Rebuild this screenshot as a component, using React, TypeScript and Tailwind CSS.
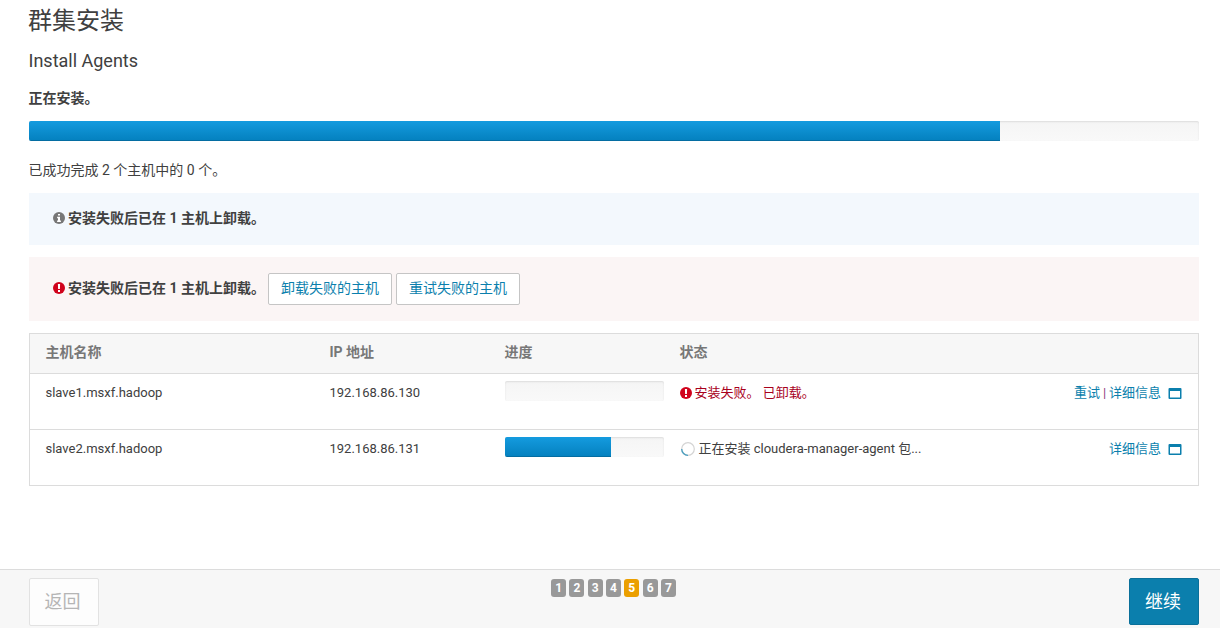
import React from 'react';

const ProgressBar = ({ value }: { value: number }) => (
  <div className="h-5 w-full overflow-hidden rounded-xs bg-linear-to-b from-[#f5f5f5] to-[#f9f9f9] shadow-[inset_0_1px_2px_rgba(0,0,0,0.1)]">
    <div
      className="h-full bg-linear-to-b from-[#149bdf] to-[#0480be] shadow-[inset_0_-1px_0_rgba(0,0,0,0.15)]"
      style={{ width: `${value}%` }}
    />
  </div>
);

const InfoIcon = () => (
  <svg className="mr-[3px] h-3 w-3 shrink-0" viewBox="0 0 12 12">
    <circle cx="6" cy="6" r="6" fill="#777" />
    <path d="M5 2h2v1.6H5z M4.1 4.8H7v3.7h.9V10H4.1V8.5H5V6.2h-.9z" fill="#fff" />
  </svg>
);

const ErrorIcon = () => (
  <svg className="mr-[3px] h-3 w-3 shrink-0" viewBox="0 0 12 12">
    <circle cx="6" cy="6" r="6" fill="#d0021b" />
    <path d="M4.9 2h2.2L6.9 7H5.1z M5 8h2v2H5z" fill="#fff" />
  </svg>
);

const WindowIcon = () => (
  <svg className="h-3 w-3.5" viewBox="0 0 14 12">
    <rect x="0.5" y="1" width="13" height="11" rx="1" fill="#0b7fad" />
    <rect x="2" y="4" width="10" height="6.5" fill="#fff" />
  </svg>
);

const Spinner = () => (
  <svg className="h-3.5 w-3.5" viewBox="0 0 14 14" fill="none">
    <circle cx="7" cy="7" r="6.3" stroke="#d4d4d4" strokeWidth="1.2" />
    <path d="M0.7 7A6.3 6.3 0 0 0 7 13.3" stroke="#4a9fc0" strokeWidth="1.3" />
  </svg>
);

const App = () => {
  const hosts = [
    { name: 'slave1.msxf.hadoop', ip: '192.168.86.130', progress: 0, failed: true },
    { name: 'slave2.msxf.hadoop', ip: '192.168.86.131', progress: 66.7, failed: false },
  ];
  const steps = [1, 2, 3, 4, 5, 6, 7];
  const currentStep = 5;

  return (
    <div className="flex h-[628px] flex-col overflow-hidden bg-white font-[Roboto,'Noto_Sans_CJK_SC',sans-serif] text-sm text-[#404040]">
      <main className="flex-1 pr-[21px] pl-[29px]">
        <h1 className="-ml-px h-[41px] pt-px text-2xl leading-[41px]">群集安装</h1>
        <h2 className="-ml-[0.5px] h-10 text-lg leading-10">Install Agents</h2>
        <p className="mt-[7px] mb-[13px] -ml-[0.5px] h-5 leading-5 font-bold">正在安装。</p>
        <ProgressBar value={83} />
        <p className="mt-[19px] mb-[13px] -ml-[0.5px] h-5 leading-5">已成功完成 2 个主机中的 0 个。</p>

        {/* Alerts */}
        <div className="mb-3 flex h-[52px] items-center bg-[#f3f8fd] pb-0.5 pl-[24px] font-bold">
          <InfoIcon />
          安装失败后已在 1 主机上卸载。
        </div>
        <div className="mb-3 flex h-16 items-center bg-[#fbf5f5] pl-[24px]">
          <div className="flex w-[215px] items-center pb-0.5 font-bold whitespace-nowrap">
            <ErrorIcon />
            安装失败后已在 1 主机上卸载。
          </div>
          <button className="mr-1 h-8 w-[124px] rounded-xs border border-[#c5c5c5] bg-white pb-0.5 text-[#0b7fad]">
            卸载失败的主机
          </button>
          <button className="h-8 w-[124px] rounded-xs border border-[#c5c5c5] bg-white pb-0.5 text-[#0b7fad]">
            重试失败的主机
          </button>
        </div>

        {/* Hosts */}
        <table className="w-full table-fixed border-separate border-spacing-0 border border-[#dcdcdc] text-left text-[13px]">
          <colgroup>
            <col className="w-[284px]" />
            <col className="w-[175px]" />
            <col className="w-[175px]" />
            <col />
            <col className="w-[180px]" />
          </colgroup>
          <thead>
            <tr className="h-[39px] bg-[#f7f7f7] text-sm text-[#777]">
              <th className="pt-0 pb-[3px] pl-[15.5px]">主机名称</th>
              <th className="pt-0 pb-[3px] pl-[15.5px]">IP 地址</th>
              <th className="pt-0 pb-[3px] pl-[15.5px]">进度</th>
              <th className="pt-0 pb-[3px] pl-[15.5px]">状态</th>
              <th />
            </tr>
          </thead>
          <tbody>
            {hosts.map((host) => (
              <tr key={host.name} className="h-14 align-top">
                <td className="border-t border-[#dcdcdc] pt-[9px] pl-[15.5px] leading-5">{host.name}</td>
                <td className="border-t border-[#dcdcdc] pt-[9px] pl-[15.5px] leading-5">{host.ip}</td>
                <td className="border-t border-[#dcdcdc] pt-[7px] pl-4 leading-5">
                  <ProgressBar value={host.progress} />
                </td>
                <td className="border-t border-[#dcdcdc] pt-[9px] pl-[15.5px] leading-5">
                  {host.failed ? (
                    <div className="-mt-px flex items-center whitespace-pre text-[#a8001c]">
                      <ErrorIcon />
                      <span className="pt-px">安装失败。 已卸载。</span>
                    </div>
                  ) : (
                    <div className="flex items-center whitespace-nowrap">
                      <span className="mr-1 -mt-px ml-px">
                        <Spinner />
                      </span>
                      正在安装 cloudera-manager-agent 包...
                    </div>
                  )}
                </td>
                <td className="border-t border-[#dcdcdc] pt-[9px] pr-4 leading-5">
                  <div className="flex items-center justify-end text-[#0b7fad]">
                    {host.failed && (
                      <>
                        <a>重试</a>
                        <span className="w-[9px] text-center text-[#904080]">|</span>
                      </>
                    )}
                    <a className="mr-[7px]">详细信息</a>
                    <WindowIcon />
                  </div>
                </td>
              </tr>
            ))}
          </tbody>
        </table>
      </main>

      {/* Wizard footer */}
      <footer className="flex h-[59px] items-start justify-between border-t border-[#dcdcdc] bg-[#f7f7f7] pt-2 pr-[21px] pl-[29px]">
        <button className="h-12 w-[70px] rounded-xs border border-[#e2e2e2] bg-[#fdfdfd] pr-[3px] text-lg text-[#b5b5b5]">
          返回
        </button>
        <div className="mt-px mr-px flex gap-[3.3px]">
          {steps.map((step) => (
            <span
              key={step}
              className={`h-[18px] w-[15px] rounded-[3px] text-center text-xs leading-[18px] font-bold text-white ${
                step === currentStep ? 'bg-[#eb9f00]' : 'bg-[#999]'
              }`}
            >
              {step}
            </span>
          ))}
        </div>
        <button className="h-[47px] w-[70px] rounded-xs border border-[#0a709a] bg-[#0b7fad] pt-px pr-[2px] text-lg text-white">
          继续
        </button>
      </footer>
    </div>
  );
};

export default App;
